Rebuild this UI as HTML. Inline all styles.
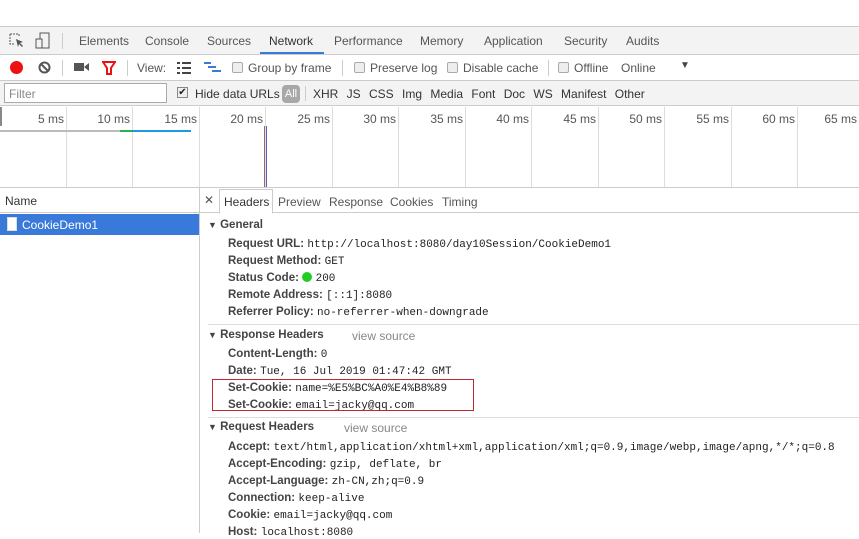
<!DOCTYPE html>
<html><head><meta charset="utf-8"><style>
*{margin:0;padding:0;box-sizing:border-box}
body{width:859px;height:533px;overflow:hidden;background:#fff;font-family:"Liberation Sans",sans-serif;font-size:12px;color:#333;position:relative}
.a{position:absolute;white-space:nowrap}
.mono{font-family:"Liberation Mono",monospace;font-size:11px;color:#222}
.k{font-weight:bold;color:#444;font-size:11.5px}
.g{color:#555}
.cb{display:inline-block;width:11px;height:11px;border:1px solid #aaa;background:#eee;border-radius:2px;vertical-align:-1px;margin-right:5px}
.vl{position:absolute;width:1px;background:#ddd}
.tri{font-size:9px;color:#444}
</style></head><body>
<div class="a" style="left:0;top:26px;width:859px;height:29px;background:#f3f3f3;border-top:1px solid #ccc;border-bottom:1px solid #ccc"></div>
<svg class="a" style="left:9px;top:33px" width="16" height="16"><path d="M1 1h9v3M1 1v10h4" fill="none" stroke="#555" stroke-dasharray="2 1"/><path d="M7 6l7 3-3 1 3 3-1 1-3-3-1 3z" fill="#555"/></svg>
<svg class="a" style="left:35px;top:32px" width="16" height="18"><rect x="5" y="1" width="9" height="15" fill="none" stroke="#555"/><rect x="1" y="7" width="6" height="9" fill="#f3f3f3" stroke="#555"/></svg>
<div class="a" style="left:62px;top:33px;width:1px;height:16px;background:#ccc"></div>
<div class="a g" style="left:79px;top:34px">Elements</div>
<div class="a g" style="left:145px;top:34px">Console</div>
<div class="a g" style="left:207px;top:34px">Sources</div>
<div class="a" style="left:269px;top:34px;color:#333">Network</div>
<div class="a" style="left:260px;top:52px;width:64px;height:2px;background:#3879d9"></div>
<div class="a g" style="left:334px;top:34px">Performance</div>
<div class="a g" style="left:420px;top:34px">Memory</div>
<div class="a g" style="left:484px;top:34px">Application</div>
<div class="a g" style="left:564px;top:34px">Security</div>
<div class="a g" style="left:626px;top:34px">Audits</div>
<div class="a" style="left:0;top:55px;width:859px;height:26px;border-bottom:1px solid #ccc"></div>
<div class="a" style="left:10px;top:61px;width:13px;height:13px;border-radius:50%;background:#e11"></div>
<svg class="a" style="left:38px;top:61px" width="13" height="13"><circle cx="6.5" cy="6.5" r="5" fill="none" stroke="#555" stroke-width="2"/><path d="M3 3l7 7" stroke="#555" stroke-width="2"/></svg>
<div class="a" style="left:62px;top:60px;width:1px;height:16px;background:#ccc"></div>
<svg class="a" style="left:74px;top:62px" width="16" height="10"><rect x="0" y="1" width="10" height="8" fill="#555"/><path d="M10 5l5-4v8z" fill="#555"/></svg>
<svg class="a" style="left:102px;top:61px" width="14" height="14"><path d="M1 1h12l-4 6v6h-4v-6z" fill="none" stroke="#e11" stroke-width="2"/></svg>
<div class="a" style="left:127px;top:60px;width:1px;height:16px;background:#ccc"></div>
<div class="a g" style="left:137px;top:61px">View:</div>
<svg class="a" style="left:177px;top:62px" width="14" height="12"><path d="M0 1h3M5 1h9M0 6h3M5 6h9M0 11h3M5 11h9" stroke="#444" stroke-width="2"/></svg>
<svg class="a" style="left:204px;top:62px" width="18" height="12"><path d="M0 1h7M4 5h8M8 9h9" stroke="#3a7bd5" stroke-width="2"/></svg>
<div class="a g" style="left:232px;top:61px"><span class="cb"></span>Group by frame</div>
<div class="a" style="left:342px;top:60px;width:1px;height:16px;background:#ccc"></div>
<div class="a g" style="left:354px;top:61px"><span class="cb"></span>Preserve log</div>
<div class="a g" style="left:447px;top:61px"><span class="cb"></span>Disable cache</div>
<div class="a" style="left:548px;top:60px;width:1px;height:16px;background:#ccc"></div>
<div class="a g" style="left:558px;top:61px"><span class="cb"></span>Offline</div>
<div class="a g" style="left:621px;top:61px">Online</div>
<div class="a" style="left:680px;top:60px;font-size:10px;color:#444">▼</div>
<div class="a" style="left:0;top:81px;width:859px;height:25px;background:#f3f3f3;border-bottom:1px solid #ccc"></div>
<div class="a" style="left:4px;top:83px;width:163px;height:20px;background:#fff;border:1px solid #aaa;color:#888;padding:3px 4px">Filter</div>
<div class="a" style="left:177px;top:87px;width:11px;height:11px;border:1px solid #888;background:#eee;font-size:10px;line-height:9px;text-align:center;color:#222">✔</div>
<div class="a" style="left:195px;top:87px;color:#333">Hide data URLs</div>
<div class="a" style="left:282px;top:85px;width:18px;height:18px;border-radius:4px;background:#a8a8a8;color:#fff;font-size:11px;text-align:center;line-height:18px">All</div>
<div class="a" style="left:305px;top:86px;width:1px;height:15px;background:#ccc"></div>
<div class="a" style="left:313px;top:87px;color:#333;word-spacing:5px">XHR JS CSS Img Media Font Doc WS Manifest Other</div>
<div class="a" style="left:0;top:106px;width:859px;height:82px;border-bottom:1px solid #ccc"></div>
<div class="a" style="left:0;top:107px;width:2px;height:19px;background:#888"></div>
<div class="vl" style="left:66px;top:107px;height:80px"></div>
<div class="vl" style="left:132px;top:107px;height:80px"></div>
<div class="vl" style="left:199px;top:107px;height:80px"></div>
<div class="vl" style="left:265px;top:107px;height:80px"></div>
<div class="vl" style="left:332px;top:107px;height:80px"></div>
<div class="vl" style="left:398px;top:107px;height:80px"></div>
<div class="vl" style="left:465px;top:107px;height:80px"></div>
<div class="vl" style="left:531px;top:107px;height:80px"></div>
<div class="vl" style="left:598px;top:107px;height:80px"></div>
<div class="vl" style="left:664px;top:107px;height:80px"></div>
<div class="vl" style="left:731px;top:107px;height:80px"></div>
<div class="vl" style="left:797px;top:107px;height:80px"></div>
<div class="a g" style="left:0;top:112px;width:64px;text-align:right">5 ms</div>
<div class="a g" style="left:66px;top:112px;width:64px;text-align:right">10 ms</div>
<div class="a g" style="left:132px;top:112px;width:65px;text-align:right">15 ms</div>
<div class="a g" style="left:199px;top:112px;width:64px;text-align:right">20 ms</div>
<div class="a g" style="left:265px;top:112px;width:65px;text-align:right">25 ms</div>
<div class="a g" style="left:332px;top:112px;width:64px;text-align:right">30 ms</div>
<div class="a g" style="left:398px;top:112px;width:65px;text-align:right">35 ms</div>
<div class="a g" style="left:465px;top:112px;width:64px;text-align:right">40 ms</div>
<div class="a g" style="left:531px;top:112px;width:65px;text-align:right">45 ms</div>
<div class="a g" style="left:598px;top:112px;width:64px;text-align:right">50 ms</div>
<div class="a g" style="left:664px;top:112px;width:65px;text-align:right">55 ms</div>
<div class="a g" style="left:731px;top:112px;width:64px;text-align:right">60 ms</div>
<div class="a g" style="left:797px;top:112px;width:60px;text-align:right">65 ms</div>
<div class="a" style="left:0;top:130px;width:120px;height:2px;background:#bbb"></div>
<div class="a" style="left:120px;top:130px;width:12px;height:2px;background:#2bb24c"></div>
<div class="a" style="left:132px;top:130px;width:59px;height:2px;background:#1a9be0"></div>
<div class="a" style="left:264px;top:126px;width:1px;height:61px;background:#a06080"></div>
<div class="a" style="left:266px;top:126px;width:1px;height:61px;background:#6060c0"></div>
<div class="a" style="left:199px;top:188px;width:1px;height:345px;background:#ccc"></div>
<div class="a" style="left:0;top:188px;width:199px;height:25px;border-bottom:1px solid #ccc"></div>
<div class="a" style="left:5px;top:194px">Name</div>
<div class="a" style="left:0;top:214px;width:199px;height:21px;background:#3879d9"></div>
<div class="a" style="left:7px;top:217px;width:10px;height:14px;background:#fff;border:1px solid #ddd"></div>
<div class="a" style="left:22px;top:218px;color:#fff">CookieDemo1</div>
<div class="a" style="left:200px;top:188px;width:659px;height:25px;border-bottom:1px solid #ccc"></div>
<div class="a" style="left:204px;top:193px;color:#555">✕</div>
<div class="a" style="left:219px;top:189px;width:54px;height:25px;border:1px solid #ccc;border-bottom:1px solid #fff;background:#fff"></div>
<div class="a" style="left:224px;top:195px">Headers</div>
<div class="a g" style="left:278px;top:195px">Preview</div>
<div class="a g" style="left:329px;top:195px">Response</div>
<div class="a g" style="left:390px;top:195px">Cookies</div>
<div class="a g" style="left:442px;top:195px">Timing</div>
<div class="a k" style="left:208px;top:219px"><span class="tri">▼</span> General</div>
<div class="a" style="left:228px;top:236px"><span class="k">Request URL:</span> <span class="mono">http://localhost:8080/day10Session/CookieDemo1</span></div>
<div class="a" style="left:228px;top:253px"><span class="k">Request Method:</span> <span class="mono">GET</span></div>
<div class="a" style="left:228px;top:270px"><span class="k">Status Code:</span> <span style="display:inline-block;width:10px;height:10px;border-radius:50%;background:#2c2;vertical-align:-1px"></span> <span class="mono">200</span></div>
<div class="a" style="left:228px;top:287px"><span class="k">Remote Address:</span> <span class="mono">[::1]:8080</span></div>
<div class="a" style="left:228px;top:304px"><span class="k">Referrer Policy:</span> <span class="mono">no-referrer-when-downgrade</span></div>
<div class="a" style="left:208px;top:324px;width:651px;height:1px;background:#ddd"></div>
<div class="a k" style="left:208px;top:329px"><span class="tri">▼</span> Response Headers</div>
<div class="a g" style="left:352px;top:329px;color:#888">view source</div>
<div class="a" style="left:228px;top:346px"><span class="k">Content-Length:</span> <span class="mono">0</span></div>
<div class="a" style="left:228px;top:363px"><span class="k">Date:</span> <span class="mono">Tue, 16 Jul 2019 01:47:42 GMT</span></div>
<div class="a" style="left:228px;top:380px"><span class="k">Set-Cookie:</span> <span class="mono">name=%E5%BC%A0%E4%B8%89</span></div>
<div class="a" style="left:228px;top:397px"><span class="k">Set-Cookie:</span> <span class="mono">email=jacky@qq.com</span></div>
<div class="a" style="left:212px;top:379px;width:262px;height:32px;border:1px solid #c0282f"></div>
<div class="a" style="left:208px;top:417px;width:651px;height:1px;background:#ddd"></div>
<div class="a k" style="left:208px;top:421px"><span class="tri">▼</span> Request Headers</div>
<div class="a g" style="left:344px;top:421px;color:#888">view source</div>
<div class="a" style="left:228px;top:439px"><span class="k">Accept:</span> <span class="mono">text/html,application/xhtml+xml,application/xml;q=0.9,image/webp,image/apng,*/*;q=0.8</span></div>
<div class="a" style="left:228px;top:456px"><span class="k">Accept-Encoding:</span> <span class="mono">gzip, deflate, br</span></div>
<div class="a" style="left:228px;top:473px"><span class="k">Accept-Language:</span> <span class="mono">zh-CN,zh;q=0.9</span></div>
<div class="a" style="left:228px;top:490px"><span class="k">Connection:</span> <span class="mono">keep-alive</span></div>
<div class="a" style="left:228px;top:507px"><span class="k">Cookie:</span> <span class="mono">email=jacky@qq.com</span></div>
<div class="a" style="left:228px;top:524px"><span class="k">Host:</span> <span class="mono">localhost:8080</span></div>
</body></html>
